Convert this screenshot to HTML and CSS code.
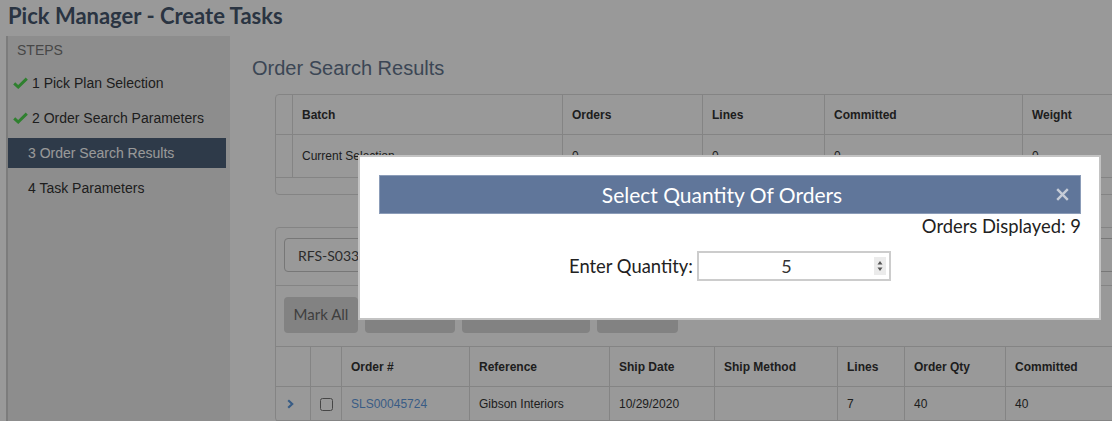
FILE: index.html
```html
<!DOCTYPE html>
<html lang="en">
<head>
<meta charset="utf-8">
<title>Pick Manager - Create Tasks</title>
<link rel="stylesheet" href="styles.css">
</head>
<body>
<div class="page">
  <h1 class="page-title">Pick Manager - Create Tasks</h1>
  <div class="layout">
    <aside class="steps">
      <div class="steps-label">STEPS</div>
      <ul class="steps-list">
        <li class="step done"><svg class="check" viewBox="0 0 15 12"><path d="M1.2 6.4 L5.2 10 L13.8 1.6" fill="none" stroke="#4fd64f" stroke-width="3" stroke-linejoin="miter"/></svg>1 Pick Plan Selection</li>
        <li class="step done"><svg class="check" viewBox="0 0 15 12"><path d="M1.2 6.4 L5.2 10 L13.8 1.6" fill="none" stroke="#4fd64f" stroke-width="3" stroke-linejoin="miter"/></svg>2 Order Search Parameters</li>
        <li class="step active">3 Order Search Results</li>
        <li class="step">4 Task Parameters</li>
      </ul>
    </aside>
    <main class="content">
      <h2 class="section-title">Order Search Results</h2>
      <div class="panel batch-panel">
        <table class="grid batch-grid">
          <colgroup>
            <col class="c-16"><col class="c-270"><col class="c-140"><col class="c-122"><col class="c-198"><col>
          </colgroup>
          <thead>
            <tr><th class="cell-empty"></th><th>Batch</th><th>Orders</th><th>Lines</th><th>Committed</th><th>Weight</th></tr>
          </thead>
          <tbody>
            <tr><td class="cell-empty"></td><td>Current Selection</td><td>0</td><td>0</td><td>0</td><td>0</td></tr>
          </tbody>
        </table>
        <div class="grid-footer"></div>
      </div>
      <div class="panel orders-panel">
        <div class="filter-row">
          <div class="select-box">RFS-S033</div>
        </div>
        <div class="action-row">
          <button class="btn btn-mark">Mark All</button>
          <button class="btn btn-unmark">Unmark All</button>
          <button class="btn btn-select">Mark Selected</button>
          <button class="btn btn-clear">Clear</button>
        </div>
        <table class="grid orders-grid">
          <colgroup>
            <col class="c-34"><col class="c-31"><col class="c-128"><col class="c-140"><col class="c-105"><col class="c-123"><col class="c-67"><col class="c-101"><col>
          </colgroup>
          <thead>
            <tr><th class="cell-empty"></th><th class="cell-empty"></th><th>Order #</th><th>Reference</th><th>Ship Date</th><th>Ship Method</th><th>Lines</th><th>Order Qty</th><th>Committed</th></tr>
          </thead>
          <tbody>
            <tr>
              <td class="cell-expand"><svg class="chevron" viewBox="0 0 7 10"><path d="M1.2 1.2 L5.2 5 L1.2 8.8" fill="none" stroke="#5f9ade" stroke-width="2.2"/></svg></td>
              <td class="cell-center"><input type="checkbox" class="row-check"></td>
              <td><a class="order-link" href="#">SLS00045724</a></td>
              <td>Gibson Interiors</td>
              <td>10/29/2020</td>
              <td></td>
              <td>7</td>
              <td>40</td>
              <td>40</td>
            </tr>
          </tbody>
        </table>
      </div>
    </main>
  </div>
</div>
<div class="backdrop"></div>
<div class="modal">
  <div class="modal-header">
    <div class="modal-title">Select Quantity Of Orders</div>
    <svg class="modal-close" viewBox="0 0 13 13"><path d="M1.2 1.2 L11.8 11.8 M11.8 1.2 L1.2 11.8" stroke="#c6ccd7" stroke-width="2.4" fill="none"/></svg>
  </div>
  <div class="modal-info">Orders Displayed: 9</div>
  <div class="qty-row">
    <label class="qty-label" for="qty">Enter Quantity:</label>
    <div class="qty-box">
      <input id="qty" class="qty-input" type="text" value="5">
      <span class="spinner">
        <svg viewBox="0 0 12 18" class="spinner-icon"><path d="M3.5 7.5 L6 4 L8.5 7.5 Z M3.5 10.5 L6 14 L8.5 10.5 Z" fill="#555"/></svg>
      </span>
    </div>
  </div>
</div>
</body>
</html>
```
FILE: styles.css
```css
* { box-sizing: border-box; }
html, body { margin: 0; height: 100%; overflow: hidden; }
body {
  font-family: "Liberation Sans", Arial, sans-serif;
  color: #333;
  background: #fff;
}
.page {
  width: 1112px;
  height: 421px;
  display: flex;
  flex-direction: column;
}
.page-title {
  margin: 0;
  height: 36px;
  line-height: 32px;
  padding-left: 8px;
  font-family: Lato, "Liberation Sans", sans-serif;
  font-weight: 700;
  font-size: 22px;
  color: #46586e;
}
.layout {
  flex: 1;
  display: flex;
  min-height: 0;
}
.steps {
  flex: 0 0 224px;
  margin-left: 6px;
  border-left: 2px solid #cfcfcf;
  background: #ececec;
  padding: 5px 4px 0 0;
}
.steps-label {
  height: 18px;
  line-height: 18px;
  padding-left: 9px;
  font-size: 14px;
  color: #777;
  margin-bottom: 9px;
}
.steps-list { list-style: none; margin: 0; padding: 0; }
.step {
  height: 30px;
  display: flex;
  align-items: center;
  padding-left: 20px;
  font-size: 14px;
  color: #333;
  margin-bottom: 5px;
}
.step.done { padding-left: 5px; }
.step.active { background: #4d617b; color: #fff; }
.check { width: 15px; height: 12px; margin-right: 4px; flex: none; }

.content {
  flex: 0 0 1000px;
  padding: 20px 0 0 22px;
}
.section-title {
  margin: 0 0 14px;
  font-size: 20px;
  font-weight: 400;
  line-height: 24px;
  color: #64768e;
}
.panel {
  margin-left: 23px;
  border: 1px solid #ddd;
  border-radius: 4px;
  background: #fff;
}
.batch-panel { margin-bottom: 32px; }
.grid {
  width: 100%;
  border-collapse: separate;
  border-spacing: 0;
  table-layout: fixed;
  font-size: 12px;
  color: #333;
}
.grid th, .grid td {
  text-align: left;
  padding: 0 9px;
  border-bottom: 1px solid #ddd;
  border-left: 1px solid #ddd;
  white-space: nowrap;
  overflow: hidden;
}
.grid th:first-child, .grid td:first-child { border-left: 0; }
.grid th { font-weight: 700; height: 40px; }
.batch-grid td { height: 43px; }
.grid-footer { height: 16px; }
.grid .cell-empty { padding: 0; }

.c-16 { width: 16px; }
.c-270 { width: 270px; }
.c-140 { width: 140px; }
.c-122 { width: 122px; }
.c-198 { width: 198px; }
.c-34 { width: 34px; }
.c-31 { width: 31px; }
.c-128 { width: 128px; }
.c-105 { width: 105px; }
.c-123 { width: 123px; }
.c-67 { width: 67px; }
.c-101 { width: 101px; }

.filter-row { padding: 10px 8px 13px; }
.select-box {
  width: 100%;
  height: 34px;
  border: 1px solid #c6c6c6;
  border-radius: 4px;
  padding-left: 13px;
  display: flex;
  align-items: center;
  font-family: Lato, "Liberation Sans", sans-serif;
  font-size: 14px;
  color: #4a4a4a;
}
.action-row {
  border-top: 1px solid #ddd;
  padding: 11px 8px 13px;
  display: flex;
  gap: 7px;
}
.btn {
  height: 36px;
  border: 0;
  border-radius: 4px;
  background: #d9d9d9;
  font-family: Lato, "Liberation Sans", sans-serif;
  font-size: 15px;
  color: #6a6a6a;
  padding: 0 6px 2px;
}
.btn-mark { width: 74px; }
.btn-unmark { width: 90px; }
.btn-select { width: 128px; }
.btn-clear { width: 81px; }

.orders-grid { border-top: 1px solid #ddd; }
.orders-grid td { height: 34px; }
.grid .cell-center { text-align: center; padding: 0; }
.grid .cell-expand { padding: 0 0 0 11px; }
.chevron { width: 7px; height: 10px; vertical-align: middle; display: block; }
.row-check { margin: 0; width: 13px; height: 13px; vertical-align: middle; }
.order-link { color: #5f9ade; text-decoration: none; }

.backdrop {
  position: fixed;
  inset: 0;
  background: rgba(0, 0, 0, 0.4);
}
.modal {
  position: absolute;
  left: 358px;
  top: 155px;
  width: 743px;
  height: 165px;
  background: #fff;
  border: 2px solid #c3c3c3;
  padding: 18px 18px 0 19px;
  font-family: Lato, "Liberation Sans", sans-serif;
  color: #222;
}
.modal-header {
  height: 39px;
  background: #60769a;
  border: 1px solid #8b9cb8;
  display: flex;
  align-items: center;
}
.modal-title {
  flex: 1;
  text-align: center;
  padding-left: 8px;
  color: #fff;
  font-size: 21px;
}
.modal-close { width: 13px; height: 13px; margin-right: 11px; flex: none; }
.modal-info {
  text-align: right;
  font-size: 18.4px;
  line-height: 22px;
  margin-top: 1px;
}
.qty-row {
  margin-top: 14px;
  display: flex;
  justify-content: center;
  align-items: center;
  gap: 4px;
}
.qty-label { font-size: 18.4px; }
.qty-box {
  width: 194px;
  height: 30px;
  border: 2px solid #ccc;
  display: flex;
  align-items: center;
}
.qty-input {
  flex: 1;
  min-width: 0;
  border: 0;
  padding: 0;
  outline: none;
  background: transparent;
  text-align: center;
  font-family: Lato, "Liberation Sans", sans-serif;
  font-size: 18px;
  color: #333;
}
.spinner {
  width: 12px;
  height: 18px;
  margin-right: 3px;
  background: #ebebeb;
  display: flex;
}
.spinner-icon { width: 12px; height: 18px; }
```
